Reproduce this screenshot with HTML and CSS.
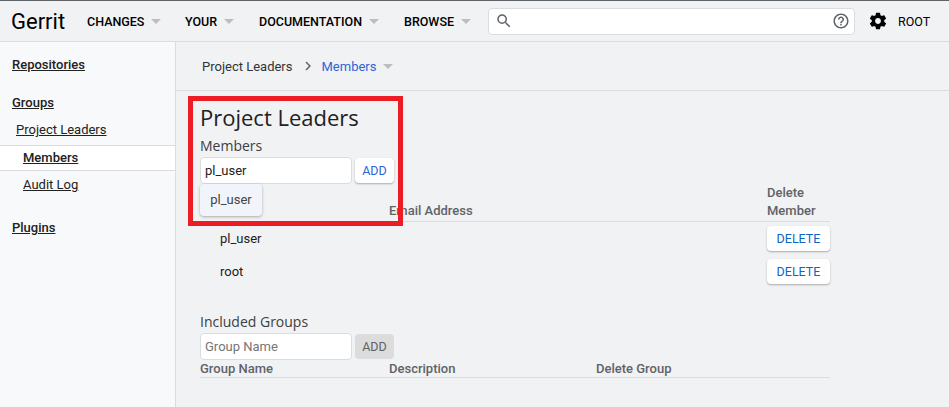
FILE: index.html
```html
<!DOCTYPE html>
<html lang="en">
<head>
    <meta charset="UTF-8">
    <title>Gerrit</title>
    <link rel="stylesheet" href="styles.css">
</head>
<body>
    <header class="topbar">
        <div class="logo">Gerrit</div>
        <nav class="menu">
            <div class="menuItem menuChanges">CHANGES<span class="caret"></span></div>
            <div class="menuItem menuYour">YOUR<span class="caret"></span></div>
            <div class="menuItem menuDocs">DOCUMENTATION<span class="caret"></span></div>
            <div class="menuItem menuBrowse">BROWSE<span class="caret"></span></div>
        </nav>
        <div class="search">
            <svg class="searchIcon" viewBox="0 0 24 24" width="18" height="18"><path d="M15.5 14h-.79l-.28-.27A6.47 6.47 0 0 0 16 9.5 6.5 6.5 0 1 0 9.5 16c1.61 0 3.09-.59 4.23-1.57l.27.28v.79l5 4.99L20.49 19l-4.99-5zm-6 0C7.01 14 5 11.99 5 9.5S7.01 5 9.5 5 14 7.01 14 9.5 11.99 14 9.5 14z"/></svg>
            <svg class="helpIcon" viewBox="0 0 24 24" width="18" height="18"><path d="M11 18h2v-2h-2v2zm1-16C6.48 2 2 6.48 2 12s4.48 10 10 10 10-4.48 10-10S17.52 2 12 2zm0 18c-4.41 0-8-3.59-8-8s3.590-8 8-8 8 3.590 8 8-3.590 8-8 8zm0-14c-2.210 0-4 1.790-4 4h2c0-1.100.9-2 2-2s2 .9 2 2c0 2-3 1.750-3 5h2c0-2.250 3-2.500 3-5 0-2.210-1.790-4-4-4z"/></svg>
        </div>
        <svg class="gear" viewBox="0 0 24 24" width="20" height="20"><path d="M19.43 12.980c.04-.32.07-.64.07-.98s-.03-.66-.07-.98l2.110-1.650c.19-.15.24-.42.12-.64l-2-3.460c-.12-.22-.39-.3-.61-.22l-2.490 1c-.52-.4-1.080-.73-1.690-.98l-.38-2.650A.488.488 0 0 0 14 2h-4c-.25 0-.46.18-.49.42l-.38 2.650c-.61.25-1.170.59-1.690.98l-2.490-1c-.23-.09-.49 0-.61.22l-2 3.460c-.13.22-.07.49.12.64l2.110 1.650c-.04.32-.07.65-.07.98s.03.66.07.98l-2.110 1.650c-.19.15-.24.42-.12.64l2 3.460c.12.22.39.3.61.22l2.490-1c.52.4 1.080.73 1.690.98l.38 2.650c.03.24.24.42.49.42h4c.25 0 .46-.18.49-.42l.38-2.650c.61-.25 1.170-.59 1.690-.98l2.490 1c.23.09.49 0 .61-.22l2-3.460c.12-.22.07-.49-.12-.64l-2.110-1.650zM12 15.500c-1.930 0-3.500-1.570-3.500-3.500s1.570-3.500 3.500-3.500 3.500 1.570 3.500 3.500-1.570 3.500-3.500 3.500z"/></svg>
        <div class="account">ROOT</div>
    </header>

    <div class="wrap">
        <aside class="left">
            <a class="sideTitle sideRepos">Repositories</a>
            <a class="sideTitle sideGroups">Groups</a>
            <a class="sideSub">Project Leaders</a>
            <a class="sideItem selected">Members</a>
            <a class="sideItem">Audit Log</a>
            <a class="sideTitle sidePlugins">Plugins</a>
        </aside>

        <main class="right">
            <div class="crumbs">
                <span>Project Leaders</span>
                <svg class="chevron" viewBox="0 0 24 24" width="18" height="18"><path d="M10 6 8.590 7.410 13.170 12l-4.580 4.590L10 18l6-6z"/></svg>
                <span class="crumbLink">Members</span>
                <span class="caret"></span>
            </div>

            <div class="content">
                <h1>Project Leaders</h1>
                <h2>Members</h2>
                <div class="addRow">
                    <div class="textBox">pl_user</div>
                    <div class="addBtn">ADD</div>
                </div>
                <div class="suggest">pl_user</div>

                <div class="row head memberHead">
                    <div class="colName"></div>
                    <div class="colMail">Email Address</div>
                    <div class="colDelete">Delete<br>Member</div>
                </div>
                <div class="row member">
                    <div class="colName memberName">pl_user</div>
                    <div class="colMail"></div>
                    <div class="colDelete"><div class="deleteBtn">DELETE</div></div>
                </div>
                <div class="row member">
                    <div class="colName memberName">root</div>
                    <div class="colMail"></div>
                    <div class="colDelete"><div class="deleteBtn">DELETE</div></div>
                </div>

                <h2 class="groupsTitle">Included Groups</h2>
                <div class="addRow">
                    <div class="textBox placeholder">Group Name</div>
                    <div class="addBtn disabled">ADD</div>
                </div>
                <div class="row head groupHead">
                    <div class="colName">Group Name</div>
                    <div class="colDesc">Description</div>
                    <div>Delete Group</div>
                </div>
            </div>
            <div class="marker"></div>
        </main>
    </div>
</body>
</html>
```

FILE: styles.css
```css
* {
    box-sizing: border-box;
}
html, body {
    height: 100%;
}
body {
    margin: 0;
    display: flex;
    flex-direction: column;
    overflow: hidden;
    font-family: Roboto, "Liberation Sans", sans-serif;
    font-size: 13px;
    color: #212121;
    background-color: #f1f2f3;
}

/* top bar */
.topbar {
    height: 42px;
    flex: none;
    display: flex;
    align-items: center;
    border-top: 1px solid #5f6368;
    border-bottom: 1px solid #dadce0;
    background-color: #f1f2f3;
}
.logo {
    margin-left: 11px;
    width: 76px;
    font-size: 22px;
    color: #000;
}
.menu {
    display: flex;
    width: 401px;
}
.menuItem {
    display: flex;
    align-items: center;
    font-size: 12.500px;
    font-weight: 500;
    color: #000;
}
.menuChanges { width: 98px; }
.menuYour { width: 74px; }
.menuDocs { width: 145px; }
.caret {
    display: inline-block;
    margin-left: 7px;
    border-left: 5px solid transparent;
    border-right: 5px solid transparent;
    border-top: 5px solid #bdbdbd;
}
.search {
    width: 367px;
    height: 27px;
    display: flex;
    align-items: center;
    justify-content: space-between;
    padding: 0 4px 0 6px;
    border: 1px solid #dadce0;
    border-radius: 4px;
    background-color: #fff;
}
.searchIcon, .helpIcon {
    fill: #5f6368;
}
.gear {
    margin-left: 13px;
    fill: #000;
}
.account {
    margin-left: 10px;
    font-size: 12.500px;
    color: #000;
}

/* sidebar */
.wrap {
    flex: 1;
    display: flex;
}
.left {
    width: 176px;
    flex: none;
    display: flex;
    flex-direction: column;
    border-right: 1px solid #dadce0;
    background-color: #f8f9fa;
}
.left a {
    text-decoration: underline;
    color: #212121;
    font-weight: 500;
}
.sideTitle {
    margin-left: 12px;
    line-height: 16px;
}
.sideRepos { margin-top: 15px; }
.sideGroups { margin-top: 22px; }
.sidePlugins { margin-top: 21px; }
.left .sideSub {
    margin: 11px 0 7px 16px;
    line-height: 16px;
    font-weight: 400;
}
.left .sideItem {
    height: 26px;
    padding-left: 23px;
    line-height: 24px;
    font-weight: 400;
}
.left .sideItem + .sideItem {
    margin-top: 2px;
}
.selected {
    border-top: 1px solid #dadce0;
    border-bottom: 1px solid #dadce0;
    background-color: #fff;
    font-weight: 500 !important;
}

/* main */
.right {
    flex: 1;
    position: relative;
}
.crumbs {
    height: 49px;
    display: flex;
    align-items: center;
    padding-left: 26px;
    border-bottom: 1px solid #dadce0;
    color: #333;
}
.chevron {
    margin: 0 5px 0 6px;
    fill: #666;
}
.crumbLink {
    color: #2a66d9;
}
.content {
    padding: 12px 0 0 24px;
    width: 654px;
}
h1 {
    margin: 0;
    font-family: "Open Sans", sans-serif;
    font-size: 22px;
    font-weight: 400;
    line-height: 28px;
    color: #212121;
}
h2 {
    margin: 5px 0 0;
    font-family: "Open Sans", sans-serif;
    font-size: 14px;
    font-weight: 400;
    line-height: 20px;
    color: #3c4043;
}
.addRow {
    display: flex;
    align-items: center;
    margin-top: 1px;
}
.textBox {
    width: 152px;
    height: 27px;
    padding-left: 4px;
    line-height: 25px;
    border: 1px solid #dadce0;
    border-radius: 4px;
    background-color: #fff;
}
.placeholder {
    color: #757575;
}
.addBtn {
    width: 39px;
    height: 25px;
    margin-left: 3px;
    line-height: 25px;
    text-align: center;
    font-size: 12.500px;
    color: #2a66d9;
    border-radius: 4px;
    background-color: #fff;
    box-shadow: 0 1px 2px rgba(0, 0, 0, .3);
}
.disabled {
    color: #5f6368;
    background-color: #dcdcdc;
    box-shadow: none;
}
.suggest {
    position: absolute;
    left: 24px;
    top: 142px;
    width: 62px;
    height: 32px;
    line-height: 32px;
    text-align: center;
    color: #444;
    border-radius: 4px;
    background-color: #f1f5fb;
    box-shadow: 0 1px 3px rgba(0, 0, 0, .3);
    z-index: 1;
}
.row {
    display: flex;
}
.head {
    border-bottom: 1px solid #dadce0;
    font-weight: 500;
    color: #5f6368;
}
.memberHead {
    margin-top: 1px;
    height: 37px;
    align-items: flex-end;
    line-height: 18px;
    padding-bottom: 1px;
}
.groupHead {
    height: 18px;
    line-height: 17px;
}
.colName {
    width: 189px;
}
.colMail {
    width: 378px;
}
.colDesc {
    width: 207px;
}
.colDelete {
    flex: 1;
}
.member {
    height: 33px;
    align-items: center;
}
.member:nth-of-type(n) .memberName {
    padding-left: 20px;
}
.deleteBtn {
    width: 63px;
    height: 25px;
    line-height: 25px;
    text-align: center;
    font-size: 12.500px;
    color: #0b66c8;
    border-radius: 4px;
    background-color: #fff;
    box-shadow: 0 1px 2px rgba(0, 0, 0, .3);
}
.groupsTitle {
    margin-top: 24px;
}

/* red highlight drawn over the screenshot */
.marker {
    position: absolute;
    left: 12px;
    top: 54px;
    width: 215px;
    height: 130px;
    border: 5px solid #ed1c24;
    z-index: 2;
}
```
